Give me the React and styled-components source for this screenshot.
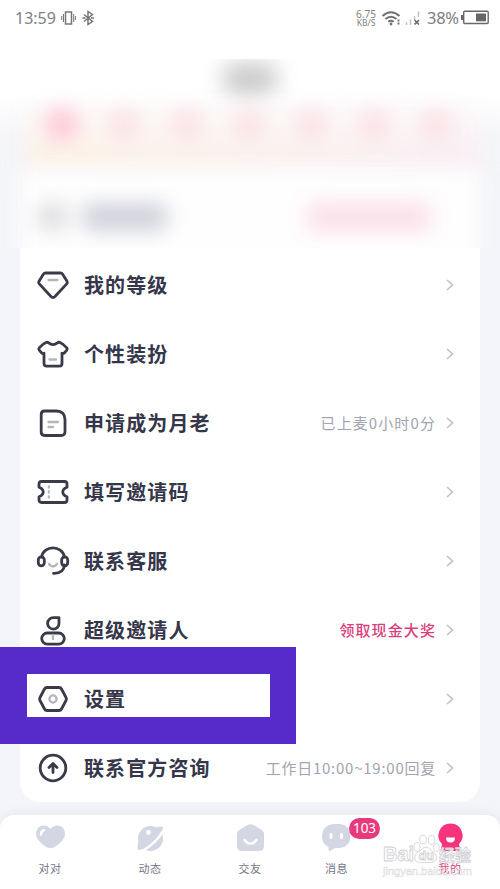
import React from 'react';
import styled, {createGlobalStyle} from 'styled-components';

const GlobalStyle = createGlobalStyle`
  * {
    box-sizing: border-box;
  }

  body {
    margin: 0;
    background: #fff;
    font-family: "Noto Sans CJK SC", sans-serif;
  }
`;

const Page = styled.div`
  position: relative;
  display: flex;
  flex-direction: column;
  width: 500px;
  height: 889px;
  overflow: hidden;
  background: linear-gradient(#fff 95px, #f5f6f8 135px, #f4f5fa 200px);
`;

const StatusBar = styled.div`
  display: flex;
  flex: none;
  justify-content: space-between;
  align-items: center;
  height: 59px;
  padding: 0 11px 24px 15px;
  color: #808080;
  font-family: "Noto Sans", sans-serif;
  background: #fff;
`;

const StatusGroup = styled.div`
  display: flex;
  align-items: center;

  svg {
    display: block;
  }
`;

const Clock = styled.span`
  width: 46px;
  font-size: 16px;
  line-height: 20px;
`;

const Speed = styled.div`
  width: 24px;
  margin-right: 3px;
  font-size: 10px;
  line-height: 12px;
  text-align: center;
  white-space: nowrap;

  small {
    display: block;
    margin-top: -2px;
    font-size: 8.5px;
    line-height: 10px;
  }
`;

const Percent = styled.span`
  width: 34px;
  margin-left: 5px;
  font-size: 16.5px;
  line-height: 20px;
  white-space: nowrap;
  letter-spacing: -0.3px;
`;

const Hero = styled.div`
  flex: none;
  height: 189px;
  overflow: hidden;
`;

const HeroTitle = styled.div`
  width: 54px;
  height: 32px;
  margin: 4px auto 0;
  border-radius: 12px;
  background: #cacaca;
  filter: blur(11px);
`;

const Banner = styled.div`
  height: 66px;
  margin: 12px 22px 0 27px;
  background: linear-gradient(rgba(255, 252, 252, 0.8), rgba(255, 252, 252, 0) 80%),
    linear-gradient(to right, #fbf1e4, #faf1ec 50%, #f8edf3);
  filter: blur(10px);
`;

const Days = styled.div`
  display: flex;
  justify-content: space-between;
  padding: 0 25px 0 18px;
`;

const Day = styled.span`
  width: 34px;
  height: 34px;
  border-radius: 50%;
  background: ${({$on}) => ($on ? '#ffc9d9' : '#fbe3e7')};
`;

const HeroRow = styled.div`
  display: flex;
  align-items: center;
  height: 110px;
  margin: -4px 20px 0;
  padding: 0 48px 14px 17px;
  background: #fefefe;
  filter: blur(10px);
`;

const Blob = styled.span`
  width: ${({$width}) => $width}px;
  height: ${({$height}) => $height}px;
  margin-left: ${({$left}) => $left || 0};
  border-radius: 10px;
  background: ${({$color}) => $color};
`;

const Card = styled.div`
  flex: none;
  height: 554px;
  margin: 0 20px 13px;
  padding: 2px 26px 0 16px;
  border-radius: 0 0 20px 20px;
  background: #fff;
`;

const Row = styled.div`
  display: flex;
  align-items: center;
  height: 69px;

  svg {
    flex: none;
  }
`;

const RowIcon = styled.svg`
  display: block;
  width: 34px;
  height: 34px;
  fill: none;
  stroke: #3a3b49;
  stroke-width: 2.8;
  stroke-linecap: round;
  stroke-linejoin: round;

  .soft {
    stroke: #b5b5bb;
    stroke-width: 2.3;
  }
`;

const RowLabel = styled.span`
  flex: 1;
  margin-left: 14px;
  color: #35364a;
  font-size: 20px;
  font-weight: 700;
  line-height: 30px;
  letter-spacing: 1.1px;
`;

const RowNote = styled.span`
  margin-right: 10px;
  color: ${({$hot}) => ($hot ? '#dc3d7d' : '#a2a4b1')};
  font-size: 15px;
  font-weight: ${({$hot}) => ($hot ? 500 : 400)};
  line-height: 22px;
  letter-spacing: ${({$tight}) => ($tight ? 0.75 : 1.1)}px;
  white-space: nowrap;
`;

const Highlight = styled.div`
  position: absolute;
  top: 647px;
  left: 0;
  width: 296px;
  height: 97px;
  border: solid #572bc9;
  border-width: 27px 26px 27px 27px;
`;

const TabBar = styled.div`
  display: grid;
  flex: none;
  grid-template-columns: repeat(5, 100px);
  height: 74px;
  padding-top: 6px;
  border-radius: 14px 14px 0 0;
  background: #fff;
  box-shadow: 0 -2px 10px rgba(120, 125, 150, 0.1);
`;

const Tab = styled.div`
  display: flex;
  flex-direction: column;
  align-items: center;
  padding-right: ${({$shift}) => $shift || 0}px;
  color: ${({$active}) => ($active ? '#d64680' : '#737586')};
  font-size: 11px;
  line-height: 16px;
  letter-spacing: 0.6px;
`;

const TabIcon = styled.div`
  position: relative;
  height: 33px;
  margin-bottom: 6px;

  svg {
    display: block;
  }
`;

const Badge = styled.span`
  position: absolute;
  top: -3px;
  left: 29px;
  width: 31px;
  height: 21px;
  border-radius: 11px;
  color: #fff;
  background: #e73a7c;
  font-family: "Noto Sans", sans-serif;
  font-size: 13.5px;
  line-height: 21px;
  letter-spacing: 0;
  text-align: center;
`;

const Watermark = styled.div`
  position: absolute;
  top: 834px;
  left: 382px;
  width: 104px;
  height: 46px;

  svg {
    display: block;
  }
`;

const rows = [
  {
    label: '我的等级',
    icon: (
      <>
        <path d="M9.500 5h15q1.300 0 2 1l4.500 7.300q.8 1.400-.3 2.600L19 28.500q-2 2-4 0L3.300 15.900q-1.100-1.200-.3-2.600L7.500 6q.7-1 2-1z" />
        <path className="soft" d="M12.500 12h9" />
      </>
    )
  },
  {
    label: '个性装扮',
    icon: (
      <>
        <path d="M10 5.500q1.500-.6 2.600.4 4.400 3.500 8.800 0Q22.500 4.900 24 5.500q3.600 1.500 6.800 5.300 1 1.200 0 2.300L28.300 16q-1 .9-2.300.2v10.300q0 2.700-2.700 2.700H10.700Q8 29.200 8 26.500V16.200q-1.300.7-2.300-.2l-2.500-2.900q-1-1.100 0-2.300Q6.400 7 10 5.500z" />
        <path className="soft" d="M13.500 22.500h6.500" />
      </>
    )
  },
  {
    label: '申请成为月老',
    note: '已上麦0小时0分',
    icon: (
      <>
        <path d="M8.700 5h11.800q8.500 0 8.500 8.500v12q0 4-4 4H8.700q-3.500 0-3.500-3.500V8.500Q5.200 5 8.700 5z" />
        <path className="soft" d="M12.500 16h9.500M12.500 21h4.500" />
      </>
    )
  },
  {
    label: '填写邀请码',
    icon: (
      <>
        <path d="M5.500 6.500h23q2.500 0 2.500 2.500v3.300c-5.600 2-5.600 7.400 0 9.400V25q0 2.500-2.500 2.500h-23Q3 27.500 3 25v-3.300c5.600-2 5.600-7.400 0-9.400V9q0-2.500 2.500-2.500z" />
        <path className="soft" d="M12.800 11.500v1M12.800 16.500v1M12.800 21.500v1" />
      </>
    )
  },
  {
    label: '联系客服',
    icon: (
      <>
        <path d="M5.500 13C8 .8 26 .8 28.500 13M28.500 21c-.5 6-4.500 8.500-11 8.300" />
        <rect x="2.300" y="12.800" width="6" height="9" rx="3" />
        <rect x="25.700" y="12.800" width="6" height="9" rx="3" />
        <path className="soft" d="M13 20q4 5 8 0" />
      </>
    )
  },
  {
    label: '超级邀请人',
    note: '领取现金大奖',
    hot: true,
    icon: (
      <>
        <path d="M17.500 4.700H23v5.600a5.700 5.700 0 1 1-5.500-5.600z" />
        <rect x="5.700" y="20" width="22.600" height="11.200" rx="5.600" />
        <path className="soft" d="M17 22v4" />
      </>
    )
  },
  {
    label: '设置',
    icon: (
      <>
        <path d="M11 5.500h12q1.700 0 2.500 1.500l4.500 8.500q.8 1.500 0 3L25.500 27q-.8 1.500-2.500 1.500H11q-1.700 0-2.500-1.500L4 18.500q-.8-1.500 0-3L8.500 7q.8-1.500 2.500-1.500z" />
        <circle className="soft" cx="17" cy="17" r="3.600" />
      </>
    )
  },
  {
    label: '联系官方咨询',
    note: '工作日10:00~19:00回复',
    tight: true,
    icon: (
      <>
        <circle cx="17" cy="17" r="12.800" />
        <path d="M17 21.500v-8M13 16.500l4-4 4 4" />
      </>
    )
  }
];

const tabs = [
  {
    label: '对对',
    icon: (
      <>
        <path d="M16.500 8C22 1.500 31 4.500 31 13c0 6-7 11-11.500 13.500q-3 1.600-6 0C9 24 2 19 2 13 2 4.500 11 1.500 16.500 8z" fill="#d4d6e4" />
        <path d="M7 13.500q0-3.500 3-4.500" stroke="#fff" strokeWidth="2.500" strokeLinecap="round" fill="none" />
      </>
    )
  },
  {
    label: '动态',
    icon: (
      <>
        <circle cx="16.500" cy="17.500" r="12.500" fill="#d4d6e4" />
        <path d="M22 6q5-1 7 0-.1 3.500-2 7zM4 21q-1 5 0 8 3.500 0 7-2z" fill="#d4d6e4" />
        <path d="M10 29Q23 21 29 10" stroke="#fff" strokeWidth="2.600" fill="none" />
        <circle cx="14.500" cy="11.500" r="2.400" fill="#fff" />
      </>
    )
  },
  {
    label: '交友',
    icon: (
      <>
        <path d="M13.500 4q3-1.700 6 0l7.500 4.500q3 1.800 3 5V25q0 5-5 5H8q-5 0-5-5V13.500q0-3.200 3-5z" fill="#d4d6e4" />
        <path d="M10.500 19q6 7.500 12 0" stroke="#fff" strokeWidth="2.600" strokeLinecap="round" fill="none" />
      </>
    )
  },
  {
    label: '消息',
    shift: 27,
    badge: '103',
    icon: (
      <>
        <path d="M13 3h7q10.500 1.500 10.500 12T20 27h-5l-5 3q-1.500.5-1.500-1.200V26Q2 23 2 15 2.500 4.500 13 3z" fill="#d4d6e4" />
        <rect x="9.500" y="12" width="3" height="6" rx="1.500" fill="#fff" />
        <rect x="20" y="12" width="3" height="6" rx="1.500" fill="#fff" />
      </>
    )
  },
  {
    label: '我的',
    active: true,
    icon: (
      <>
        <path d="M16.500 2.500a12 12 0 0 1 8.500 20.500l1.500 7h-20L8 23A12 12 0 0 1 16.500 2.500z" fill="#f5347d" />
        <path d="M12 16.500h9q0 5-4.500 5t-4.500-5z" fill="#fff" />
      </>
    )
  }
];

const Chevron = () => (
  <svg width="8" height="12" viewBox="0 0 8 12" fill="none" stroke="#bfc0c8" strokeWidth="1.600">
    <path d="M1 1l5.500 5L1 11" />
  </svg>
);

const Phone = () => (
  <svg width="16" height="16" viewBox="0 0 16 16" fill="none" stroke="#777" strokeWidth="1.500">
    <rect x="4.500" y="2" width="6" height="12" />
    <path d="M2.500 4v8M12.700 4v8M.700 6v4M14.400 6v4" strokeWidth="1" />
  </svg>
);

const Bluetooth = () => (
  <svg width="13" height="16" viewBox="0 0 13 16" fill="none" stroke="#707070" strokeWidth="1.400">
    <path d="M2 4.500l8.500 7L6 14.500v-13l4.500 3-8.500 7M.500 8h3M9 8h3" />
  </svg>
);

const Wifi = () => (
  <svg width="22" height="16" viewBox="0 0 22 16" fill="none" stroke="#707070" strokeWidth="1.900">
    <path d="M1.500 6Q10 -1.500 18.500 6M4.500 9q5.500-4.600 11 0M7.300 11.800q2.700-2 5.400 0" />
    <circle cx="10" cy="14" r="1.400" fill="#707070" stroke="none" />
    <path d="M17.500 9.500v2M17.500 12.500v2" />
  </svg>
);

const Signal = () => (
  <svg width="19" height="16" viewBox="-2 0 19 16" fill="none" stroke="#c5c5c5" strokeWidth="1.600">
    <path d="M1.500 12v3M5.500 9.500V15M9.500 6v4M13.500 1.500V7" />
    <path d="M9.500 10l4.500 4.500M14 10l-4.500 4.500" stroke="#666" />
  </svg>
);

const Battery = () => (
  <svg width="28" height="15" viewBox="0 0 28 15">
    <rect x="2.700" y="1.200" width="24.500" height="12.300" rx="1" fill="none" stroke="#686868" strokeWidth="1.400" />
    <rect x="0" y="5" width="2" height="5" fill="#686868" />
    <rect x="15" y="3.500" width="10" height="7.800" fill="#666" />
  </svg>
);

const BaiduMark = () => (
  <svg width="104" height="46" viewBox="0 0 104 46" fontFamily='"Liberation Sans", "Noto Sans CJK SC", sans-serif'>
    <g fill="#fff" fillOpacity="0.900" stroke="#cfcfd3" strokeWidth="0.800">
      <text x="1" y="27" fontSize="20" fontWeight="700" textLength="31">Bai</text>
      <ellipse cx="35" cy="13" rx="3" ry="4.500" />
      <ellipse cx="41" cy="5.500" rx="3.300" ry="4.500" />
      <ellipse cx="49.500" cy="6" rx="3.300" ry="4.500" />
      <ellipse cx="54.500" cy="13.500" rx="3" ry="4" />
      <path d="M44 13q3 0 5.500 4 6.500 3 4.500 9-2 3.500-10 2.300Q35 29.500 33 26q-1.500-6 5-9 3-4 6-4z" />
      <text x="36.500" y="26" fontSize="12.500" fontWeight="700">du</text>
      <text x="57" y="27" fontSize="16" fontWeight="700">经验</text>
      <text x="1" y="41" fontSize="11" fillOpacity="0.600" stroke="#dadadd" strokeWidth="0.500" textLength="89">jingyan.baidu.com</text>
    </g>
  </svg>
);

const App = () => (
  <Page>
    <GlobalStyle />
    <StatusBar>
      <StatusGroup>
        <Clock>13:59</Clock>
        <Phone />
        <span style={{width: 5}} />
        <Bluetooth />
      </StatusGroup>
      <StatusGroup>
        <Speed>6.75<small>KB/S</small></Speed>
        <Wifi />
        <Signal />
        <Percent>38%</Percent>
        <Battery />
      </StatusGroup>
    </StatusBar>
    <Hero>
      <HeroTitle />
      <Banner>
        <Days>
          {[1, 2, 3, 4, 5, 6, 7].map(day => <Day key={day} $on={day === 1} />)}
        </Days>
      </Banner>
      <HeroRow>
        <Blob $width={32} $height={28} $color="#dfdfe2" />
        <Blob $width={86} $height={28} $left="13px" $color="#d0d2da" />
        <Blob $width={126} $height={30} $left="auto" $color="#fbe1ea" />
      </HeroRow>
    </Hero>
    <Card>
      {rows.map(({label, icon, note, hot, tight}) => (
        <Row key={label}>
          <RowIcon viewBox="0 0 34 34">{icon}</RowIcon>
          <RowLabel>{label}</RowLabel>
          {note ? <RowNote $hot={hot} $tight={tight}>{note}</RowNote> : null}
          <Chevron />
        </Row>
      ))}
    </Card>
    <TabBar>
      {tabs.map(({label, icon, active, shift, badge}) => (
        <Tab key={label} $active={active} $shift={shift}>
          <TabIcon>
            <svg width="33" height="33" viewBox="0 0 33 33">{icon}</svg>
            {badge ? <Badge>{badge}</Badge> : null}
          </TabIcon>
          {label}
        </Tab>
      ))}
    </TabBar>
    <Highlight />
    <Watermark>
      <BaiduMark />
    </Watermark>
  </Page>
);

export default App;
